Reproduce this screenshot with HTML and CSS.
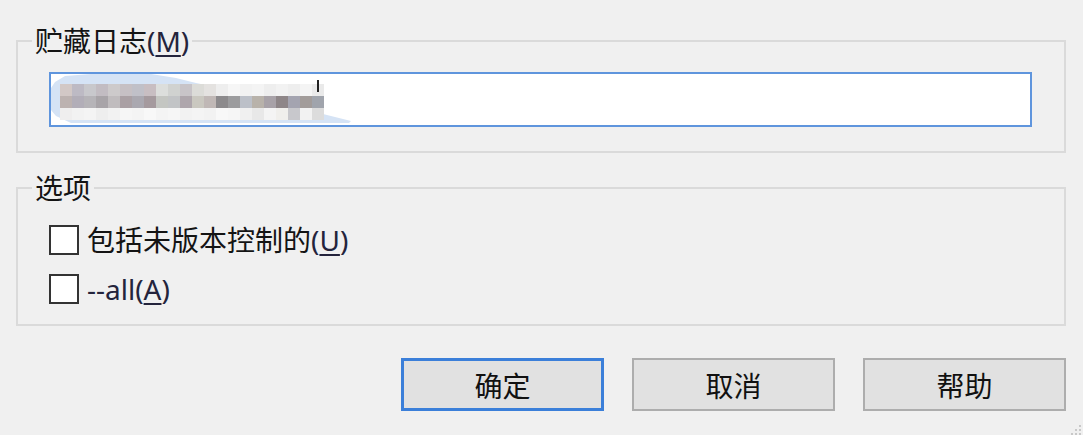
FILE: index.html
```html
<!DOCTYPE html>
<html lang="zh-CN">
<head>
    <meta charset="UTF-8">
    <title>贮藏</title>
    <link rel="stylesheet" href="styles.css">
</head>
<body>
    <div class="dialog">
        <fieldset class="group group-msg">
            <legend>贮藏日志<span class="key">(<u>M</u>)</span></legend>
            <div class="msg-box">
                <div class="smudge"></div>
                <div class="mosaic">
                    <div class="mosaic-row row-a"></div>
                    <div class="mosaic-row row-b"></div>
                    <div class="mosaic-row row-c"></div>
                </div>
                <div class="caret"></div>
            </div>
        </fieldset>

        <fieldset class="group group-opts">
            <legend>选项</legend>
            <label class="check-row first">
                <span class="check"></span>
                <span>包括未版本控制的<span class="key">(<u>U</u>)</span></span>
            </label>
            <label class="check-row">
                <span class="check"></span>
                <span class="key">--all(<u>A</u>)</span>
            </label>
        </fieldset>

        <div class="buttons">
            <button class="btn btn-default">确定</button>
            <button class="btn">取消</button>
            <button class="btn">帮助</button>
        </div>
    </div>

    <svg class="grip" width="16" height="16" viewBox="0 0 16 16">
        <rect x="12" y="6" width="2" height="2" fill="#c8c8c8"/>
        <rect x="8" y="10" width="2" height="2" fill="#c8c8c8"/>
        <rect x="12" y="10" width="2" height="2" fill="#c8c8c8"/>
        <rect x="4" y="14" width="2" height="2" fill="#c8c8c8"/>
        <rect x="8" y="14" width="2" height="2" fill="#c8c8c8"/>
        <rect x="12" y="14" width="2" height="2" fill="#c8c8c8"/>
    </svg>
</body>
</html>
```

FILE: styles.css
```css
body {
    margin: 0;
    width: 1083px;
    height: 435px;
    position: relative;
    overflow: hidden;
    background-color: #f0f0f0;
    font-family: "Noto Sans", "Noto Sans CJK SC", sans-serif;
    font-size: 28px;
    color: #141414;
}

.dialog {
    padding: 25px 17px 0 16px;
}

.group {
    margin: 0;
    padding: 0 0 24px 0;
    border: 2px solid #dadada;
    min-width: 0;
}

.group legend {
    margin-left: 14px;
    padding: 0 3px;
    line-height: 32px;
}

.key {
    color: #24243c;
}

.key u {
    text-underline-offset: 3px;
    text-decoration-thickness: 2px;
}

/* message box */
.msg-box {
    position: relative;
    margin: 15px 0 0 31px;
    width: 983px;
    height: 55px;
    box-sizing: border-box;
    border: 2px solid #5f95dd;
    background-color: #fff;
    padding: 10px 0 0 9px;
}

.smudge {
    position: absolute;
    left: 0;
    top: 0;
    width: 300px;
    height: 49px;
    background-color: #d5e3f5;
    clip-path: polygon(0 14px, 4px 8px, 14px 2px, 40px 0, 100px 0, 125px 4px, 145px 9px, 160px 12px, 200px 22px, 300px 47px, 298px 49px, 20px 49px, 5px 42px, 0 36px);
}

.mosaic {
    position: relative;
    display: flex;
    flex-direction: column;
}

.mosaic-row {
    width: 264px;
    height: 12px;
}

.row-a {
    background: linear-gradient(to right,
        #d2c8c6 0 12px, #bdbac4 12px 24px, #c8c8cc 24px 36px, #c2bcc2 36px 48px,
        #cdcacb 48px 60px, #c6c0c4 60px 72px, #c0c0c8 72px 84px, #c8bec2 84px 96px,
        #dcdedc 96px 108px, #d0d2d0 108px 120px, #c8c4c8 120px 132px, #dcdcd8 132px 144px,
        #e4e2e0 144px 156px, #eeeeee 156px 168px, #f6f6f6 168px 180px, #f2f2f2 180px 192px,
        #f4f4f4 192px 204px, #eeeeee 204px 216px, #f2f2f2 216px 228px, #eeeeee 228px 240px,
        #f4f4f4 240px 252px, #eaeaea 252px 264px);
}

.row-b {
    background: linear-gradient(to right,
        #bcb2b0 0 12px, #b2aeb8 12px 24px, #b6b4b8 24px 36px, #a8a4a8 36px 48px,
        #c0bcbe 48px 60px, #aaa0a4 60px 72px, #aaa8b0 72px 84px, #a59a9e 84px 96px,
        #c4c6c2 96px 108px, #c2c4c6 108px 120px, #aea6ac 120px 132px, #cac8c0 132px 144px,
        #c0b8b6 144px 156px, #8c8a8c 156px 168px, #9c9c9e 168px 180px, #bcc0c8 180px 192px,
        #b8b2aa 192px 204px, #a8a2a8 204px 216px, #8e8688 216px 228px, #a4a4b0 228px 240px,
        #a29c9a 240px 252px, #a0a4ac 252px 264px);
}

.row-c {
    background: linear-gradient(to right,
        #efeeee 0 12px, #f2f2f2 12px 24px, #f4f4f4 24px 36px, #eeeeee 36px 48px,
        #f2f2f2 48px 60px, #f6f6f6 60px 72px, #f4f4f4 72px 84px, #f8f8f8 84px 96px,
        #f4f4f4 96px 108px, #f6f6f6 108px 120px, #f2f2f2 120px 132px, #f4f4f4 132px 144px,
        #f2f2f2 144px 156px, #f8f8f8 156px 168px, #f6f6f6 168px 180px, #f0f0f0 180px 192px,
        #e8e8e8 192px 204px, #f4f4f4 204px 216px, #f0efec 216px 228px, #c8c8cc 228px 240px,
        #f2f2f2 240px 252px, #dcdcdc 252px 264px);
}

.caret {
    position: absolute;
    left: 266px;
    top: 6px;
    width: 2px;
    height: 12px;
    background-color: #222;
}

/* options */
.group-opts {
    margin-top: 19px;
    padding-bottom: 19px;
}

.check-row {
    display: flex;
    align-items: center;
    gap: 8px;
    height: 32px;
    margin: 17px 0 0 31px;
    line-height: 32px;
}

.check-row.first {
    margin-top: 20px;
}

.check {
    width: 30px;
    height: 30px;
    box-sizing: border-box;
    border: 2px solid #333;
    background-color: #fff;
    flex: none;
}

/* buttons */
.buttons {
    display: flex;
    justify-content: flex-end;
    gap: 28px;
    margin-top: 32px;
}

.btn {
    width: 203px;
    height: 53px;
    box-sizing: border-box;
    background-color: #e1e1e1;
    border: 2px solid #adadad;
    font-family: inherit;
    font-size: 28px;
    color: #111;
    padding: 0;
}

.btn-default {
    border: 3px solid #3b7fd9;
}

.grip {
    position: absolute;
    right: 0;
    bottom: 0;
}
```
